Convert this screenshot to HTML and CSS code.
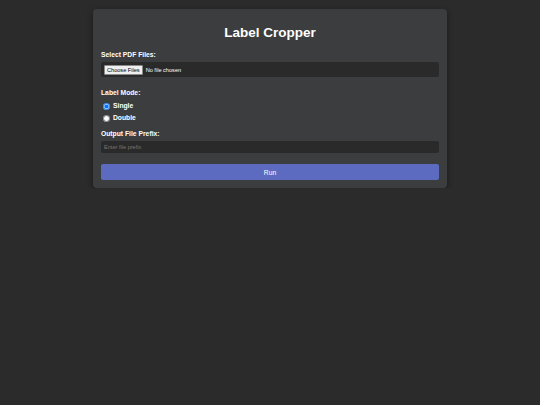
FILE: index.html
```html
<!DOCTYPE html>
<html lang="en">
<head>
  <meta charset="UTF-8">
  <title>Label Cropper</title>
  <meta name="viewport" content="width=device-width, initial-scale=1">
  <link rel="stylesheet" href="styles.css">
</head>
<body>

  <!-- Main card -->
  <main class="card">
    <h1>Label Cropper</h1>

    <form class="form">
      <div class="field field-file">
        <label class="field-label" for="pdfs">Select PDF Files:</label>
        <div class="file-box">
          <input type="file" id="pdfs" class="file-input" multiple accept=".pdf">
        </div>
      </div>

      <div class="field field-radios">
        <span class="field-label">Label Mode:</span>
        <label class="radio"><input type="radio" name="mode" value="single" checked> Single</label>
        <label class="radio"><input type="radio" name="mode" value="double"> Double</label>
      </div>

      <div class="field">
        <label class="field-label" for="prefix">Output File Prefix:</label>
        <input type="text" id="prefix" class="text-input" placeholder="Enter file prefix">
      </div>

      <button type="button" class="run-btn">Run</button>
    </form>
  </main>

</body>
</html>
```

FILE: styles.css
```css
body {
  margin: 0;
  font-family: 'Liberation Sans', Arial, sans-serif;
  background-color: #2b2b2b;
  color: #fff;
}
.card {
  width: 338px;
  margin: 9px auto 0;
  padding: 13px 8px 8px;
  background-color: #3c3d3f;
  border-radius: 4px;
  box-shadow: 0 2px 6px rgba(0,0,0,0.4);
}
h1 {
  margin: 0 0 6px;
  font-size: 13.5px;
  line-height: 22px;
  text-align: center;
}
.form {
  display: flex;
  flex-direction: column;
}
.field {
  display: flex;
  flex-direction: column;
  margin-bottom: 10px;
}
.field-file {
  margin-bottom: 11px;
}
.field-radios {
  margin-bottom: 5px;
}
.field-label {
  font-size: 6.75px;
  font-weight: bold;
  line-height: 9px;
  margin-bottom: 3px;
}
.file-box {
  background-color: #2a2a2a;
  border-radius: 2px;
  height: 15px;
  padding: 0 3px;
  display: flex;
  align-items: center;
}
.file-input {
  font-size: 5.6px;
  font-family: 'Liberation Sans', Arial, sans-serif;
  color: #fff;
}
.file-input::file-selector-button {
  font-size: 5.6px;
  font-family: 'Liberation Sans', Arial, sans-serif;
  background-color: #efefef;
  color: #000;
  border: 1px solid #8a8a8a;
  border-radius: 1px;
  padding: 1px 2px;
  margin-right: 3px;
}
.radio {
  display: flex;
  align-items: center;
  gap: 3px;
  font-size: 6.75px;
  font-weight: bold;
  line-height: 12px;
  margin-left: 2px;
}
.radio input {
  margin: 0;
  width: 7px;
  height: 7px;
}
.text-input {
  background-color: #2a2a2a;
  border: none;
  border-radius: 2px;
  height: 12px;
  padding: 0 3px;
  font-size: 5.6px;
  color: #fff;
  font-family: 'Liberation Sans', Arial, sans-serif;
}
.text-input::placeholder {
  color: #777;
}
.run-btn {
  margin-top: 1px;
  height: 16px;
  border: none;
  border-radius: 2px;
  background-color: #5c6bc0;
  color: #fff;
  font-size: 6.75px;
  font-family: 'Liberation Sans', Arial, sans-serif;
}
```
